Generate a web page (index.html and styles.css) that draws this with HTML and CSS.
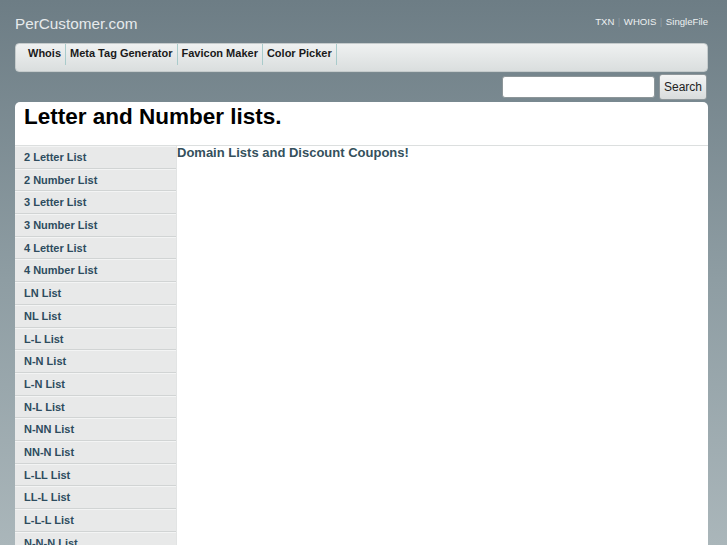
FILE: index.html
```html
<!DOCTYPE html>
<html>
<head>
<meta charset="utf-8">
<title>PerCustomer.com</title>
<link rel="stylesheet" href="styles.css">
</head>
<body>
<div class="page">
  <div class="top">
    <div class="logo">PerCustomer.com</div>
    <div class="toplinks"><a href="#">TXN</a><span class="sep">|</span><a href="#">WHOIS</a><span class="sep">|</span><a href="#">SingleFile</a></div>
  </div>
  <nav class="nav">
    <a href="#" class="nav-item">Whois</a><a href="#" class="nav-item">Meta Tag Generator</a><a href="#" class="nav-item">Favicon Maker</a><a href="#" class="nav-item">Color Picker</a>
  </nav>
  <div class="search">
    <input type="text" class="search-input">
    <button class="search-btn">Search</button>
  </div>
  <div class="panel">
    <div class="panel-head"><h1>Letter and Number lists.</h1></div>
    <div class="panel-body">
      <ul class="side">
        <li><a href="#">2 Letter List</a></li>
        <li><a href="#">2 Number List</a></li>
        <li><a href="#">3 Letter List</a></li>
        <li><a href="#">3 Number List</a></li>
        <li><a href="#">4 Letter List</a></li>
        <li><a href="#">4 Number List</a></li>
        <li><a href="#">LN List</a></li>
        <li><a href="#">NL List</a></li>
        <li><a href="#">L-L List</a></li>
        <li><a href="#">N-N List</a></li>
        <li><a href="#">L-N List</a></li>
        <li><a href="#">N-L List</a></li>
        <li><a href="#">N-NN List</a></li>
        <li><a href="#">NN-N List</a></li>
        <li><a href="#">L-LL List</a></li>
        <li><a href="#">LL-L List</a></li>
        <li><a href="#">L-L-L List</a></li>
        <li><a href="#">N-N-N List</a></li>
      </ul>
      <div class="content">
        <h2>Domain Lists and Discount Coupons!</h2>
      </div>
    </div>
  </div>
</div>
</body>
</html>
```
FILE: styles.css
```css
html, body {
  margin: 0;
  padding: 0;
}
body {
  font-family: "Liberation Sans", Arial, sans-serif;
  background: linear-gradient(to bottom, #6d7d85 0px, #8e9da3 280px, #aab6ba 545px);
  background-color: #aab6ba;
  min-height: 545px;
}
a { text-decoration: none; }
.page {
  padding: 0 19px 0 15px;
}
.top {
  display: flex;
  justify-content: space-between;
  height: 43px;
}
.logo {
  padding-top: 15px;
  font-size: 15.3px;
  line-height: 18px;
  color: #e6eaec;
}
.toplinks {
  padding-top: 15px;
  font-size: 9.6px;
  line-height: 13px;
  color: #eef1f2;
}
.toplinks a { color: #eef1f2; }
.toplinks .sep {
  color: #8e9ca2;
  margin: 0 3.5px;
}
.nav {
  display: flex;
  height: 26.5px;
  padding: 0 0 0 8px;
  border: 1px solid #c5cbcc;
  border-radius: 4px;
  background: linear-gradient(to bottom, #eff1f1, #dadede);
  box-shadow: 0 1px 0 #7a898f;
}
.nav-item {
  display: block;
  height: 21px;
  line-height: 18px;
  padding: 0 4px;
  border-right: 1px solid #a9cbcb;
  font-size: 11px;
  font-weight: bold;
  color: #1a1a1a;
}
.search {
  display: flex;
  justify-content: flex-end;
  align-items: center;
  gap: 4px;
  height: 30.5px;
  padding-right: 1px;
}
.search-input {
  box-sizing: border-box;
  width: 153px;
  height: 22px;
  margin: 0;
  border: 1px solid #8d9699;
  border-radius: 3px;
  background: #fff;
}
.search-btn {
  box-sizing: border-box;
  width: 48px;
  height: 26px;
  margin: 0;
  padding: 0;
  border: 1px solid #8f979a;
  border-radius: 3px;
  background: linear-gradient(to bottom, #f4f5f5, #d9dcdc);
  font-family: "Liberation Sans", Arial, sans-serif;
  font-size: 12px;
  color: #222;
}
.panel {
  background: #fff;
  border-radius: 5px 5px 0 0;
}
.panel-head {
  height: 43px;
  border-bottom: 1px solid #dcdfdf;
}
.panel-head h1 {
  margin: 0;
  padding: 2px 0 0 9px;
  font-size: 22.5px;
  line-height: 26px;
  font-weight: bold;
  color: #000;
}
.panel-body {
  display: flex;
  align-items: flex-start;
}
.side {
  list-style: none;
  margin: 0;
  padding: 0;
  width: 161px;
  flex: 0 0 161px;
  border-right: 1px solid #e2e4e4;
}
.side li {
  height: 20.7px;
  border-top: 1px solid #f3f4f4;
  border-bottom: 1px solid #d1d4d4;
  background: #e8e9e9;
}
.side a {
  display: block;
  padding-left: 9px;
  line-height: 20.7px;
  font-size: 11px;
  font-weight: bold;
  color: #2d4c5e;
}
.content {
  flex: 1;
}
.content h2 {
  margin: 0;
  font-size: 13px;
  line-height: 14px;
  font-weight: bold;
  color: #34505c;
}
```
